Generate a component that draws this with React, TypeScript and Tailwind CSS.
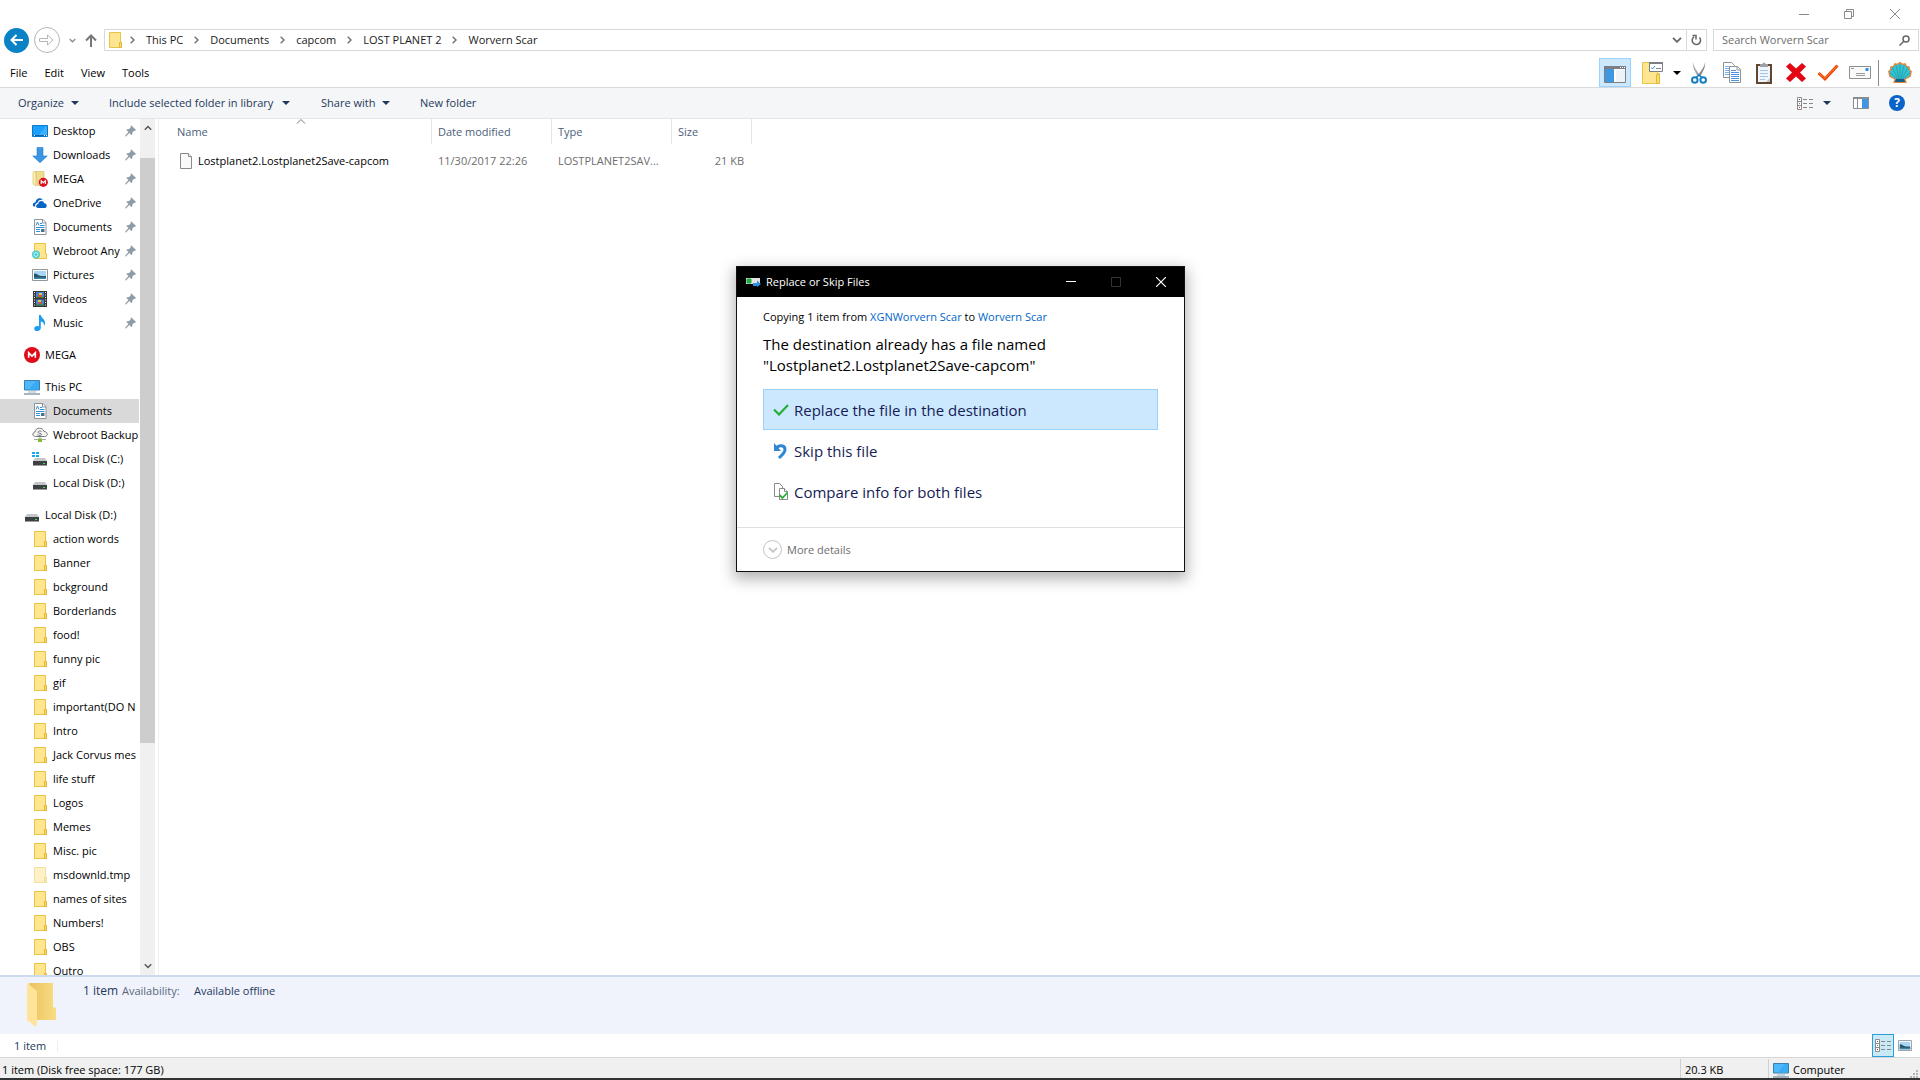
import React from 'react';

type IconProps = { className?: string };

/* ---------- Icons ---------- */

const Folder = ({ className = '' }: IconProps) => (
  <svg viewBox="0 0 13 16" className={`h-4 w-[13px] shrink-0 ${className}`}>
    <path d="M.5.5h11v10h1v5H.5z" fill="#ffe58f" stroke="#e9c343" />
    <path d="M10.5 10.5h2v5h-2z" fill="#f8d868" stroke="#e0b83a" />
  </svg>
);

const DesktopIcon = () => (
  <svg viewBox="0 0 16 12" className="h-3 w-4">
    <path d="M.5.5h15v11H.5z" fill="#1ba1fb" stroke="#0a78c8" />
    <path d="M6 11 14 1h1v10z" fill="#3db0ff" />
    <path d="M1 10.5h14" stroke="#0b64a8" />
    <path d="M2 10.5h1M12 10.5h1M14 10.5h1" stroke="#fff" />
  </svg>
);

const DownloadIcon = () => (
  <svg viewBox="0 0 16 16" className="size-4">
    <path d="M5 .5h6V9h4.3L8 15.8.7 9H5z" fill="#3b95e3" stroke="#2a7fcb" strokeWidth=".6" />
  </svg>
);

const MegaFolderIcon = () => (
  <svg viewBox="0 0 16 16" className="size-4">
    <path d="M1 1 4 0v15l-3-2z" fill="#fff0b0" stroke="#cdb865" strokeWidth=".6" />
    <path d="M4 .5h8v14H5z" fill="#f0dd8c" stroke="#cdb865" strokeWidth=".6" />
    <circle cx="11.3" cy="11.3" r="4.6" fill="#dd1420" />
    <path d="M9.2 13v-3.2l2.1 1.9 2.1-1.9V13" fill="none" stroke="#fff" strokeWidth="1.1" />
  </svg>
);

const OneDriveIcon = () => (
  <svg viewBox="0 0 16 16" className="size-4">
    <path d="M1.500 11.500C.2 9.500 1 7.300 3.500 7.200 3.500 3.500 8.500 1.500 11 5 8 4.300 6 5.800 5.600 7.700 3.800 8 2.800 9.500 3.200 11.500z" fill="#0b63c4" />
    <path d="M6 13c-2.600-.3-2.300-3.800.2-4C6.500 5.600 11.200 5 12.200 8.300 15.300 8.200 15.600 12.600 13 13z" fill="#0b63c4" />
  </svg>
);

const DocumentsIcon = () => (
  <svg viewBox="0 0 16 16" className="size-4">
    <path d="M2.500.5h8.500l3 3v12H2.500z" fill="#fff" stroke="#8c9399" />
    <path d="M10.500.5v3.500H14" fill="none" stroke="#8c9399" />
    <path d="M4 6.500 5.500 3 7 6.500M8 4.500h2M8 6.500h4.500M4 8.500h8.500M4 12.500h4M4 10.500h4" fill="none" stroke="#2f8fd6" />
    <path d="M9 10h3.500v3H9z" fill="#44748c" />
  </svg>
);

const WebrootFolderIcon = () => (
  <svg viewBox="0 0 16 16" className="size-4">
    <path d="M2.500.5h11v10h1v5h-12z" fill="#ffe58f" stroke="#e9c343" />
    <circle cx="4" cy="11.500" r="4" fill="#4ccdd0" />
    <circle cx="4" cy="11.500" r="2" fill="none" stroke="#c9f5f4" />
  </svg>
);

const PicturesIcon = ({ className = 'h-3 w-4' }: IconProps) => (
  <svg viewBox="0 0 16 12" preserveAspectRatio="none" className={className}>
    <path d="M.5.5h15v11H.5z" fill="#fff" stroke="#8f969c" />
    <path d="M2 2h12v8H2z" fill="#a9d6f4" />
    <path d="M2 4.500c3 0 4 2 7 2.500h5v3H2z" fill="#24566b" />
    <path d="M2 8.500h12V10H2z" fill="#3f86ad" />
  </svg>
);

const VideosIcon = () => (
  <svg viewBox="0 0 14 16" className="h-4 w-3.5">
    <path d="M0 0h14v16H0z" fill="#383838" />
    <path d="M1.500 1v15M12.500 1v15" stroke="#eee" strokeDasharray="1 1.500" />
    <path d="M3 1h8v6H3zM3 8.500h8V15H3z" fill="#4a7fd6" />
    <path d="M5 4h4v2H5zM6 11h3v2H6z" fill="#d3562c" />
    <path d="M6 2h3v2H6zM5 9h3v2H5z" fill="#e6c83c" />
    <path d="M3 6h8v1H3zM3 13.500h8V15H3z" fill="#3b7a34" />
  </svg>
);

const MusicIcon = () => (
  <svg viewBox="0 0 16 16" className="size-4">
    <path d="M7 0h1.800c.2 3 4.700 4.200 4.200 8.500-.1 1.200-.7 2-1.200 2.500.6-2.600-.6-4-3-4.500V13c0 1.800-1.700 3-3.600 3C3.500 16 2 15 2.200 13.400 2.400 11.500 4.800 10.600 7 11.400z" fill="#1c9cf0" />
  </svg>
);

const MegaIcon = () => (
  <svg viewBox="0 0 16 16" className="size-4">
    <circle cx="8" cy="8" r="8" fill="#e00b18" />
    <path d="M4.700 10.800V5.800L8 9l3.300-3.200v5" fill="none" stroke="#fff" strokeWidth="1.700" />
  </svg>
);

const MonitorIcon = () => (
  <svg viewBox="0 0 16 15" className="h-[15px] w-4">
    <path d="M.5.5h15v9.500H.5z" fill="#4db8fb" stroke="#3b7fae" />
    <path d="M5 9.500 12 1h3v8.500z" fill="#3aaaf2" />
    <path d="M4 12h8" stroke="#9fb4c2" />
    <path d="M0 14h16" stroke="#7f97a8" strokeWidth="1.400" />
  </svg>
);

const CloudIcon = () => (
  <svg viewBox="0 0 16 16" className="size-4">
    <path d="M3.500 9.500C0 9.500 0 5.500 3 5 3.500 0 11 0 12 4.500c4 0 4.500 5 .5 5z" fill="#f4f4f4" stroke="#777" />
    <path d="M9.500 4.500C8 3.500 6 4 6 5.300c0 1.400 3.500.6 3.500 2 0 1.300-2.500 1.500-4 .4" fill="none" stroke="#777" />
    <path d="M2 12.500h12M8 10v2" stroke="#aaa" />
    <path d="M6 11.500h4V15H6z" fill="#86b93a" />
  </svg>
);

const DiskIcon = ({ windows = false }: { windows?: boolean }) => (
  <svg viewBox="0 0 16 16" className="size-4">
    {windows && <path d="M0 1h3v2H0zM4 1h3v2H4zM0 4h3v2H0zM4 4h3v2H4z" fill="#12aaf0" />}
    <path d="M3 7h10l2 3H1z" fill="#c4c7c9" />
    <path d="M1 10h14v4.500H1z" fill="#3d4143" />
    <path d="M11 12.500h2" stroke="#39e05a" />
  </svg>
);

const PinIcon = () => (
  <svg viewBox="0 0 12 12" className="absolute right-[3px] h-3 w-[11px]">
    <path d="M7 0l5 5-1 1-1-.3-2 2c.3 1 .1 2-.8 2.800L4.800 8.100 1 12 0 11.500 3.800 7.200 1.500 4.800C2.300 4 3.300 3.700 4.300 4l2.100-2L6 1z" fill="#8f9ba6" />
  </svg>
);

const Caret = ({ className = '' }: IconProps) => (
  <svg viewBox="0 0 8 4" className={`h-1 w-2 shrink-0 ${className}`}>
    <path d="M0 0h8L4 4z" fill="currentColor" />
  </svg>
);

const Chevron = ({ className = '' }: IconProps) => (
  <svg viewBox="0 0 10 6" className={className} fill="none" stroke="currentColor">
    <path d="M1 .8 5 4.800 9 .8" strokeWidth="1.800" />
  </svg>
);

const Crumb = () => (
  <svg viewBox="0 0 5 8" className="h-2 w-[5px]" fill="none" stroke="#707070" strokeWidth="1.400">
    <path d="M.7.7 4 4 .7 7.300" />
  </svg>
);

const DetailsViewIcon = () => (
  <svg viewBox="0 0 16 13" className="h-[13px] w-4">
    <path d="M.5.500h4v12h-4zM.5 4.500h4M.5 8.500h4" fill="#fff" stroke="#8a8a8a" />
    <path d="M6 2.500h4M12 2.500h4M6 6.500h4M12 6.500h4M6 10.500h4M12 10.500h4" stroke="#888" />
    <path d="M2 2.500h1" stroke="#444" />
    <path d="M2 6.500h1" stroke="#2f8fe0" />
    <path d="M2 10.500h1" stroke="#d22" />
  </svg>
);

const NavPaneIcon = () => (
  <svg viewBox="0 0 22 17" className="h-[17px] w-[22px]">
    <path d="M.5.5h21v16H.5z" fill="#fff" stroke="#7b7f83" />
    <path d="M0 0h22v3H0z" fill="#7b7f83" />
    <path d="M16 1.500h1M18 1.500h1M20 1.500h1" stroke="#fff" />
    <path d="M1 3h9v13H1z" fill="#3f97e2" />
    <path d="M12 4h9v12h-9z" fill="#eef3f8" />
  </svg>
);

const FolderOptionsIcon = () => (
  <svg viewBox="0 0 21 22" className="h-[22px] w-[21px]">
    <path d="M.5.5h15v11h2v10H.5z" fill="#ffe58f" stroke="#e9c343" />
    <path d="M14.500 12.500h3v9h-3z" fill="#f9db6b" stroke="#e0b83a" />
    <path d="M7.500.5h13v9h-13z" fill="#fff" stroke="#7b7f83" />
    <path d="M7 1h14" stroke="#7b7f83" strokeWidth="2" />
    <path d="m9.500 5.500 1 1.500 2.500-3" fill="none" stroke="#2f8fe0" />
    <path d="M14 6.500h5" stroke="#888" />
  </svg>
);

const ScissorsIcon = () => (
  <svg viewBox="0 0 16 22" className="h-[22px] w-4">
    <path d="M2 0c0 4 4 9 7 13l-2 2C4 10 1 4 2 0z" fill="#a3a9ae" />
    <path d="M14 0c0 4-4 9-7 13l2 2C12 10 15 4 14 0z" fill="#878d92" />
    <circle cx="3.800" cy="18" r="2.800" fill="none" stroke="#1580c4" strokeWidth="2" />
    <circle cx="12.200" cy="18" r="2.800" fill="none" stroke="#1580c4" strokeWidth="2" />
    <path d="m5 15.500 3-2.500 3 2.500" fill="none" stroke="#1580c4" strokeWidth="1.600" />
  </svg>
);

const CopyIcon = () => (
  <svg viewBox="0 0 18 21" className="h-[21px] w-[18px]">
    <path d="M.5.5h8l3 3v12H.5z" fill="#fff" stroke="#8d949a" />
    <path d="M2 4.500h5M2 6.500h6M2 8.500h6M2 10.500h6M2 12.500h6" stroke="#78b2ec" />
    <path d="M6.500 4.500h8l3 3v13h-11z" fill="#fff" stroke="#8d949a" />
    <path d="M14 4.500v3.500h3.500" fill="none" stroke="#8d949a" />
    <path d="M8 8.500h5M8 10.500h8M8 12.500h8M8 14.500h8M8 16.500h8M8 18.500h8" stroke="#4d94e6" />
  </svg>
);

const PasteIcon = () => (
  <svg viewBox="0 0 16 22" className="h-[22px] w-4">
    <path d="M0 2h16v20H0z" fill="#65442c" />
    <path d="M2 4h12v16H2z" fill="#eef6ff" />
    <path d="M10 20h4v-4z" fill="#b8c6d4" />
    <path d="M4 8.500h8M4 11.500h8M4 14.500h8M4 17.500h5" stroke="#a8c4e0" />
    <path d="M4 5V2h2.500a1.500 1.500 0 0 1 3 0H12v3z" fill="#9da1a5" />
  </svg>
);

const DeleteIcon = () => (
  <svg viewBox="0 0 20 19" className="h-[19px] w-5">
    <path d="M4 0 10 5.500 16 0l4 3.500-6 6 6 6L16 19l-6-5.500L4 19l-4-3.500 6-6-6-6z" fill="#e30613" />
  </svg>
);

const CheckIcon = () => (
  <svg viewBox="0 0 22 17" className="h-[17px] w-[22px]">
    <path d="m1.500 9 6.500 5.800L20.500 1.500" fill="none" stroke="#e8480c" strokeWidth="3" />
    <path d="m2 9 6 5.300L20 2" fill="none" stroke="#ff7a22" strokeWidth="1" />
  </svg>
);

const MailIcon = () => (
  <svg viewBox="0 0 22 13" className="h-[13px] w-[22px]">
    <path d="M.5.5h21v12H.5z" fill="#fafafa" stroke="#8a8f94" />
    <path d="M16.500 2h3v3h-3z" fill="#2f8fe8" />
    <path d="M2 2.500h3M7 7.500h9M7 9.500h9" stroke="#999" />
  </svg>
);

const ShellIcon = () => (
  <svg viewBox="0 0 24 21" className="h-[21px] w-6">
    <path d="M6 20.500 7 17 2 14.500.8 9.500 2.500 8 3 5 5.500 4.500 7 1.800l2.500.6L12 .6l2.500 1.800 2.500-.6 1.500 2.700L21 5l.5 3 1.700 1.500-1.200 5-5 2.500 1 3.500z" fill="#35c4cf" stroke="#e88236" strokeWidth="1.300" />
    <path d="M12 18V2.500M11 17 8 3.500M13 17l3-13.500M10 17 4.500 6M14 17l5.500-11M9 17l-6.500-6M15 17l6.500-6" stroke="#1f93a8" strokeWidth=".7" />
    <path d="M8 17h8l1 3H7z" fill="#155f86" />
  </svg>
);

const PreviewPaneIcon = () => (
  <svg viewBox="0 0 16 12" className="h-3 w-4">
    <path d="M.5.5h15v11H.5z" fill="#fff" stroke="#888d92" />
    <path d="M0 1h16" stroke="#888d92" strokeWidth="2" />
    <path d="M4.500 1v11" stroke="#888d92" />
    <path d="M9 2h6v9H9z" fill="#3f97e2" />
  </svg>
);

const LargeFolder = () => (
  <svg viewBox="0 0 30 44" className="h-11 w-[30px]">
    <defs>
      <linearGradient id="fold" x1="0" x2="1">
        <stop offset="0" stopColor="#e8c35f" />
        <stop offset="1" stopColor="#fbdc83" />
      </linearGradient>
    </defs>
    <path d="M2 0h24v24l3 1v12H9z" fill="url(#fold)" />
    <path d="M0 0 10 8v29l-1 7-9-7z" fill="#ffe399" />
  </svg>
);

/* ---------- Data ---------- */

type Node = { label: string; icon: React.ReactNode; pinned?: boolean; root?: boolean; selected?: boolean };

const quick: Node[] = [
  { label: 'Desktop', icon: <DesktopIcon /> },
  { label: 'Downloads', icon: <DownloadIcon /> },
  { label: 'MEGA', icon: <MegaFolderIcon /> },
  { label: 'OneDrive', icon: <OneDriveIcon /> },
  { label: 'Documents', icon: <DocumentsIcon /> },
  { label: 'Webroot Any', icon: <WebrootFolderIcon /> },
  { label: 'Pictures', icon: <PicturesIcon /> },
  { label: 'Videos', icon: <VideosIcon /> },
  { label: 'Music', icon: <MusicIcon /> },
].map((n) => ({ ...n, pinned: true }));

const computer: Node[] = [
  { label: 'This PC', icon: <MonitorIcon />, root: true },
  { label: 'Documents', icon: <DocumentsIcon />, selected: true },
  { label: 'Webroot Backup', icon: <CloudIcon /> },
  { label: 'Local Disk (C:)', icon: <DiskIcon windows /> },
  { label: 'Local Disk (D:)', icon: <DiskIcon /> },
];

const folderNames = [
  'action words', 'Banner', 'bckground', 'Borderlands', 'food!', 'funny pic', 'gif', 'important(DO N', 'Intro',
  'Jack Corvus mes', 'life stuff', 'Logos', 'Memes', 'Misc. pic', 'msdownld.tmp', 'names of sites', 'Numbers!', 'OBS', 'Outro',
];

const disk: Node[] = [
  { label: 'Local Disk (D:)', icon: <DiskIcon />, root: true },
  ...folderNames.map((label) => ({
    label,
    icon: <Folder className={label === 'msdownld.tmp' ? 'opacity-50' : ''} />,
  })),
];

const groups: Node[][] = [quick, [{ label: 'MEGA', icon: <MegaIcon />, root: true }], computer, disk];

const crumbs = ['This PC', 'Documents', 'capcom', 'LOST PLANET 2', 'Worvern Scar'];

/* ---------- Parts ---------- */

const TreeRow = ({ node }: { node: Node }) => (
  <li>
    <button
      className={`relative flex h-6 w-full items-center gap-[5px] overflow-hidden whitespace-nowrap text-left text-black ${
        node.root ? 'pl-6' : 'pl-8'
      } ${node.selected ? 'bg-[#d9d9d9]' : ''}`}
    >
      <span className="flex w-4 shrink-0 justify-center">{node.icon}</span>
      {node.label}
      {node.pinned && <PinIcon />}
    </button>
  </li>
);

const TitleBar = () => (
  <div className="flex h-7 shrink-0 justify-end pr-px text-[#8a8a8a]">
    <button aria-label="Minimize" className="flex w-[46px] items-center justify-center">
      <svg viewBox="0 0 10 10" className="size-2.5" stroke="currentColor"><path d="M0 5.500h10" /></svg>
    </button>
    <button aria-label="Restore" className="flex w-11 items-center justify-center">
      <svg viewBox="0 0 10 10" className="size-2.5" fill="none" stroke="currentColor">
        <path d="M.5 2.500h7v7h-7zM2.500 2.500v-2h7v7h-2" />
      </svg>
    </button>
    <button aria-label="Close" className="flex w-12 items-center justify-center">
      <svg viewBox="0 0 10 10" className="size-2.5" stroke="currentColor"><path d="m0 0 10 10M10 0 0 10" /></svg>
    </button>
  </div>
);

const AddressRow = () => (
  <div className="flex h-6 shrink-0 items-center pr-px">
    <button aria-label="Back" className="ml-1 flex size-[25px] items-center justify-center rounded-full bg-[#0a82c6]">
      <svg viewBox="0 0 14 12" className="h-3 w-3.5" fill="none" stroke="#fff" strokeWidth="2">
        <path d="M1.500 6H13M6.500 1l-5 5 5 5" />
      </svg>
    </button>
    <button aria-label="Forward" className="ml-[5px] flex size-[26px] items-center justify-center rounded-full border border-[#b5b5b5] bg-white">
      <svg viewBox="0 0 16 12" className="h-3 w-4" fill="none" stroke="#b5b5b5">
        <path d="M.5 4.500H8.500V1l5.500 5-5.500 5V7.500H.5z" />
      </svg>
    </button>
    <button aria-label="Recent locations" className="ml-2 flex w-2 justify-center text-[#8a8a8a]">
      <Chevron className="h-[5px] w-[7px]" />
    </button>
    <button aria-label="Up" className="ml-[9px] mr-[7px] flex w-3 justify-center">
      <svg viewBox="0 0 12 13" className="h-[13px] w-3" fill="none" stroke="#777" strokeWidth="2">
        <path d="M6 13V1.500M1 6.500l5-5 5 5" />
      </svg>
    </button>
    <div className="flex h-[22px] flex-1 items-center border border-[#d9d9d9]">
      <Folder className="ml-1 mr-2" />
      <ol className="flex flex-1 items-center">
        {crumbs.map((c) => (
          <li key={c} className="flex items-center">
            <span className="w-[5px]"><Crumb /></span>
            <a href="#" className="px-[11px] text-[#1a1a1a]">{c}</a>
          </li>
        ))}
      </ol>
      <button aria-label="Previous locations" className="mr-1 text-[#666]"><Chevron className="h-1.5 w-2.5" /></button>
      <button aria-label="Refresh" className="flex h-5 w-5 items-center justify-center border-l border-[#d9d9d9]">
        <svg viewBox="0 0 11 12" className="h-3 w-[11px]" fill="none" stroke="#666" strokeWidth="1.500">
          <path d="M3 2.800a4.200 4.200 0 1 0 5.500.7M1.500 1.500H5v4" />
        </svg>
      </button>
    </div>
    <label className="ml-1.5 flex h-[22px] w-[206px] items-center border border-[#d9d9d9] pl-2 pr-2">
      <input aria-label="Search Worvern Scar" placeholder="Search Worvern Scar" className="min-w-0 flex-1 outline-none placeholder:text-[#6d6d6d]" />
      <svg viewBox="0 0 11 11" className="size-[11px]" fill="none" stroke="#666" strokeWidth="1.500">
        <circle cx="7" cy="4" r="3" /><path d="M4.800 6.200.5 10.500" />
      </svg>
    </label>
  </div>
);

const ToolButton = ({ label, className, children }: { label: string; className: string; children: React.ReactNode }) => (
  <button aria-label={label} className={`flex h-full items-center justify-center ${className}`}>{children}</button>
);

const MenuRow = () => (
  <div className="flex h-9 shrink-0 items-end border-b border-[#d9d9d9]">
    <nav className="flex h-7 items-center gap-[17px] pl-2.5">
      {['File', 'Edit', 'View', 'Tools'].map((m) => <button key={m}>{m}</button>)}
    </nav>
    <div className="ml-auto flex h-[29px] items-center pr-1">
      <ToolButton label="Navigation pane" className="w-8 border border-[#99d1ff] bg-[#cce8ff] pt-1"><NavPaneIcon /></ToolButton>
      <ToolButton label="Folder options" className="w-[43px]"><FolderOptionsIcon /></ToolButton>
      <ToolButton label="More options" className="w-1.5"><Caret /></ToolButton>
      <ToolButton label="Cut" className="w-[38px]"><ScissorsIcon /></ToolButton>
      <ToolButton label="Copy" className="w-7"><CopyIcon /></ToolButton>
      <ToolButton label="Paste" className="w-9"><PasteIcon /></ToolButton>
      <ToolButton label="Delete" className="w-7"><DeleteIcon /></ToolButton>
      <ToolButton label="Properties" className="w-9"><CheckIcon /></ToolButton>
      <ToolButton label="Email" className="w-7"><MailIcon /></ToolButton>
      <span className="ml-1 h-[26px] w-px bg-[#8a8a8a]" />
      <ToolButton label="Classic settings" className="ml-[9px] w-6"><ShellIcon /></ToolButton>
      <span className="w-1" />
    </div>
  </div>
);

const CommandBar = () => (
  <div className="flex h-[31px] shrink-0 items-center border-b border-[#e5e5e5] bg-[#f5f6f7] pl-[18px] pr-[15px] text-[#1e395b]">
    <button className="flex w-[91px] items-center gap-[7px]">Organize <Caret /></button>
    <button className="flex w-[212px] items-center gap-[9px]">Include selected folder in library <Caret /></button>
    <button className="flex w-[99px] items-center gap-[7px]">Share with <Caret /></button>
    <button>New folder</button>
    <div className="ml-auto flex items-center">
      <button aria-label="Change your view"><DetailsViewIcon /></button>
      <button aria-label="More views" className="ml-2.5 mr-[22px]"><Caret /></button>
      <button aria-label="Preview pane" className="mr-5"><PreviewPaneIcon /></button>
      <button aria-label="Help" className="flex size-4 items-center justify-center rounded-full bg-[#0a63c9] text-[12px] font-bold leading-4 text-white">?</button>
    </div>
  </div>
);

const Sidebar = () => (
  <aside className="flex w-[159px] shrink-0 border-r border-[#f0f0f0]">
    <nav className="min-w-0 flex-1 overflow-hidden pr-px">
      {groups.map((g, i) => (
        <ul key={i} className="mb-2">
          {g.map((n) => <TreeRow key={n.label} node={n} />)}
        </ul>
      ))}
    </nav>
    <div className="mr-[3px] flex w-[15px] flex-col bg-[#f0f0f0] text-[#555]">
      <button aria-label="Scroll up" className="flex h-[39px] shrink-0 justify-center pt-1.5"><Chevron className="h-1.5 w-2 rotate-180" /></button>
      <div className="h-[585px] bg-[#cdcdcd]" />
      <button aria-label="Scroll down" className="mt-auto flex h-4 justify-center pt-1"><Chevron className="h-1.5 w-2" /></button>
    </div>
  </aside>
);

const FileList = () => (
  <main className="min-w-0 flex-1">
    <table className="w-[593px] table-fixed border-separate border-spacing-0">
      <thead>
        <tr className="h-[25px] text-left text-[#4c607a]">
          <th className="relative w-[273px] border-r border-[#e5e5e5] p-0 pl-[18px] font-normal">
            Name
            <svg viewBox="0 0 10 5" className="absolute left-[137px] top-0 h-[5px] w-2.5" fill="none" stroke="#777">
              <path d="m1 4.500 4-4 4 4" />
            </svg>
          </th>
          <th className="w-[120px] border-r border-[#e5e5e5] p-0 pl-1.5 font-normal">Date modified</th>
          <th className="w-[120px] border-r border-[#e5e5e5] p-0 pl-1.5 font-normal">Type</th>
          <th className="w-20 border-r border-[#e5e5e5] p-0 pl-1.5 font-normal">Size</th>
        </tr>
      </thead>
      <tbody>
        <tr className="h-[34px] text-[#6d6d6d]">
          <td className="p-0 pl-[21px] text-black">
            <span className="flex items-center gap-1.5">
              <svg viewBox="0 0 12 16" className="h-4 w-3" fill="#fafafa" stroke="#8a8a8a">
                <path d="M.5.5h8l3 3v12H.5z" /><path d="M8.500.5v3h3" />
              </svg>
              Lostplanet2.Lostplanet2Save-capcom
            </span>
          </td>
          <td className="p-0 pl-1.5">11/30/2017 22:26</td>
          <td className="p-0 pl-1.5">LOSTPLANET2SAV...</td>
          <td className="p-0 pr-2 text-right">21 KB</td>
        </tr>
      </tbody>
    </table>
  </main>
);

const Footer = () => (
  <footer className="shrink-0">
    <section className="flex h-[59px] border-t-2 border-[#ccdaee] bg-[#f0f3fc] pl-[27px] pt-1.5 text-[#1e395b]">
      <LargeFolder />
      <p className="ml-[26px] flex h-4 items-center whitespace-pre">
        <span className="w-[39px] text-[12px]">1 item</span>
        <span className="w-[72px] text-[#5a6779]">Availability:</span>
        <span>Available offline</span>
      </p>
    </section>
    <section className="flex h-[23px] items-center pl-3.5 pr-2 text-[#1e395b]">
      <span className="w-[43px]">1 item</span>
      <span className="h-3 w-px bg-[#eee]" />
      <button aria-label="Details view" className="ml-auto flex h-full w-[22px] items-center justify-center border border-[#26a0da] bg-[#cbe8f6]"><DetailsViewIcon /></button>
      <button aria-label="Large icons view" className="ml-1"><PicturesIcon className="h-[11px] w-3.5" /></button>
    </section>
    <section className="flex h-[21px] items-end border-t border-[#d7d7d7] bg-[#f0f0f0] text-black">
      <span className="flex-1 pl-0.5">1 item (Disk free space: 177 GB)</span>
      <span className="flex h-[19px] w-[88px] items-end border-l border-[#d0d0d0] pl-1">20.3 KB</span>
      <span className="flex h-[19px] w-[152px] items-end gap-1 border-l border-[#d0d0d0] pl-1">
        <MonitorIcon />
        Computer
        <svg viewBox="0 0 8 8" className="ml-auto mr-0.5 size-2 self-end" fill="#b5b5b5">
          <path d="M6 0h2v2H6zM3 3h2v2H3zM6 3h2v2H6zM0 6h2v2H0zM3 6h2v2H3zM6 6h2v2H6z" />
        </svg>
      </span>
    </section>
    <div className="h-0.5 bg-[#333]" />
  </footer>
);

const ReplaceDialog = () => (
  <div className="pointer-events-none absolute inset-x-0 top-[266px] flex justify-center pl-px">
    <div
      role="dialog"
      aria-label="Replace or Skip Files"
      className="pointer-events-auto w-[449px] border border-[#111] bg-white text-black shadow-[0_5px_14px_2px_rgba(0,0,0,0.3)]"
    >
      <header className="flex h-[30px] items-center bg-black pl-[9px] text-white">
        <svg viewBox="0 0 15 9" className="h-[9px] w-[15px]">
          <path d="M0 0h14v6H0z" fill="#e4e4e4" />
          <path d="M1 1h4v4H1z" fill="#1fae3a" stroke="#1fae3a" />
          <path d="M7 5h4V2.500l4 3.500-4 3V8H7z" fill="#2f8fe0" />
        </svg>
        <h1 className="ml-[5px] flex-1">Replace or Skip Files</h1>
        <button aria-label="Minimize" className="flex h-full w-[45px] items-center justify-center">
          <svg viewBox="0 0 10 10" className="size-2.5" stroke="#fff"><path d="M0 4.500h10" /></svg>
        </button>
        <button aria-label="Maximize" disabled className="flex h-full w-[45px] items-center justify-center">
          <svg viewBox="0 0 10 10" className="size-2.5" fill="none" stroke="#333"><path d="M.5.5h9v9h-9z" /></svg>
        </button>
        <button aria-label="Close" className="flex h-full w-[46px] items-center justify-center">
          <svg viewBox="0 0 10 10" className="size-2.5" stroke="#fff" strokeWidth="1.200"><path d="m0 0 10 10M10 0 0 10" /></svg>
        </button>
      </header>
      <div className="px-[26px] pb-[15px] pt-3">
        <p className="leading-4">
          Copying 1 item from <a href="#" className="text-[#0066cc]">XGNWorvern Scar</a> to <a href="#" className="text-[#0066cc]">Worvern Scar</a>
        </p>
        <h2 className="mt-[9px] text-[15px] leading-[21px]">
          The destination already has a file named<br />"Lostplanet2.Lostplanet2Save-capcom"
        </h2>
        <div className="mt-[13px] text-[15px] text-[#151c55]">
          <button className="flex h-[41px] w-full items-center gap-[5px] border border-[#99d1ff] bg-[#cce8ff] pl-[9px]">
            <svg viewBox="0 0 16 12" className="h-3 w-4" fill="none" stroke="#27ae35" strokeWidth="2.200"><path d="m1 5.500 5 5L15 1" /></svg>
            Replace the file in the destination
          </button>
          <button className="flex h-[41px] w-full items-center gap-[5px] pl-2.5">
            <svg viewBox="0 0 16 16" className="size-4">
              <path d="M3 5.500C6 1.500 12 2 12 6.500c0 3.500-3 5.500-6 8.500" fill="none" stroke="#2f86d2" strokeWidth="3" />
              <path d="M1 0v8h7z" fill="#2f86d2" />
            </svg>
            Skip this file
          </button>
          <button className="flex h-[41px] w-full items-center gap-[5px] pl-2.5">
            <svg viewBox="0 0 16 17" className="h-[17px] w-4" fill="#fff" stroke="#8a8a8a">
              <path d="M1.500.5h5l3 3v10h-8z" /><path d="M6.500 5.500h5l3 3v8h-8z" /><path d="M11.500 5.500v3h3" />
              <path d="m6.500 12 3 3 5-5.500" fill="none" stroke="#27ae35" strokeWidth="1.800" />
            </svg>
            Compare info for both files
          </button>
        </div>
      </div>
      <div className="flex h-11 items-center border-t border-[#dfdfdf] pl-[26px] text-[#6d6d6d]">
        <button className="flex items-center gap-[5px]">
          <span className="flex size-[19px] items-center justify-center rounded-full border border-[#c4c4c4] text-[#c4c4c4]">
            <Chevron className="h-1.5 w-2.5" />
          </span>
          More details
        </button>
      </div>
    </div>
  </div>
);

export default function App() {
  return (
    <div className="relative flex h-screen flex-col overflow-hidden bg-white font-['Open_Sans',sans-serif] text-[11px] leading-4 text-black">
      <TitleBar />
      <AddressRow />
      <MenuRow />
      <CommandBar />
      <div className="flex min-h-0 flex-1">
        <Sidebar />
        <FileList />
      </div>
      <Footer />
      <ReplaceDialog />
    </div>
  );
}
